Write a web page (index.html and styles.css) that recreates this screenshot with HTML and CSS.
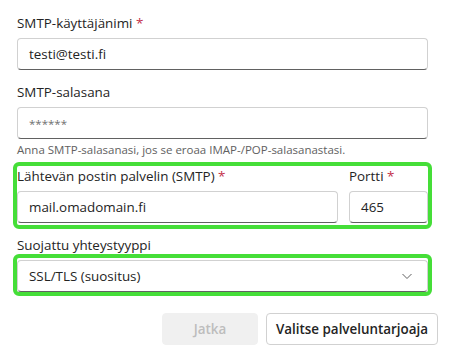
FILE: index.html
```html
<!DOCTYPE html>
<html lang="fi">
<head>
  <meta charset="UTF-8">
  <title>SMTP-asetukset</title>
  <link rel="stylesheet" href="styles.css">
</head>
<body>
  <div class="form">
    <div class="field">
      <label class="label">SMTP-käyttäjänimi <span class="req">*</span></label>
      <div class="input">testi@testi.fi</div>
    </div>

    <div class="field">
      <label class="label">SMTP-salasana</label>
      <div class="input placeholder">******</div>
      <div class="hint">Anna SMTP-salasanasi, jos se eroaa IMAP-/POP-salasanastasi.</div>
    </div>

    <div class="highlight server-row">
      <div class="field grow">
        <label class="label">Lähtevän postin palvelin (SMTP) <span class="req">*</span></label>
        <div class="input">mail.omadomain.fi</div>
      </div>
      <div class="field port">
        <label class="label">Portti <span class="req">*</span></label>
        <div class="input">465</div>
      </div>
    </div>

    <label class="label select-label">Suojattu yhteystyyppi</label>
    <div class="highlight">
      <div class="input select">
        <span>SSL/TLS (suositus)</span>
        <svg width="12" height="12" viewBox="0 0 12 12"><path d="M1.5 4l4.5 4.5 4.5-4.5" fill="none" stroke="#616161" stroke-width="1"/></svg>
      </div>
    </div>

    <div class="actions">
      <button class="btn disabled">Jatka</button>
      <button class="btn">Valitse palveluntarjoaja</button>
    </div>
  </div>
</body>
</html>
```

FILE: styles.css
```css
body {
  margin: 0;
  font-family: "Open Sans", "Noto Sans", sans-serif;
  background: #ffffff;
  color: #242424;
}

.form {
  padding: 13px 22px 0 17px;
}

.field {
  display: flex;
  flex-direction: column;
  margin-bottom: 12px;
}

.label {
  font-size: 13.4px;
  line-height: 20px;
  margin-bottom: 5px;
  color: #242424;
}

.req {
  color: #c4314b;
}

.input {
  box-sizing: border-box;
  height: 32px;
  padding: 0 11px;
  display: flex;
  align-items: center;
  font-size: 13.4px;
  color: #242424;
  background: #ffffff;
  border: 1px solid #d1d1d1;
  border-bottom-color: #616161;
  border-radius: 4px;
}

.placeholder {
  color: #707070;
  font-size: 11.5px;
}

.hint {
  font-size: 11.5px;
  line-height: 16px;
  color: #616161;
  margin-top: 3px;
  margin-bottom: -8px;
}

.highlight {
  border: 4px solid #45de38;
  border-radius: 6px;
  margin-left: -4px;
  margin-right: -4px;
}

.server-row {
  display: flex;
  gap: 11px;
  margin-top: 12px;
  padding-bottom: 2px;
}

.server-row .field {
  margin-bottom: 0;
}

.grow {
  flex: 1;
}

.port {
  width: 79px;
}

.select-label {
  display: block;
  margin-top: 6px;
  margin-bottom: -1px;
}

.select {
  justify-content: space-between;
  margin-top: 2px;
  padding-right: 14px;
}

.actions {
  display: flex;
  justify-content: flex-end;
  gap: 8px;
  margin-top: 17px;
  margin-right: -10px;
}

.btn {
  height: 32px;
  padding: 0 9px;
  font-family: inherit;
  font-size: 13.4px;
  font-weight: 600;
  color: #242424;
  background: #ffffff;
  border: 1px solid #d1d1d1;
  border-radius: 4px;
}

.btn.disabled {
  width: 96px;
  color: #bdbdbd;
  background: #f0f0f0;
  border-color: #f0f0f0;
}
```
